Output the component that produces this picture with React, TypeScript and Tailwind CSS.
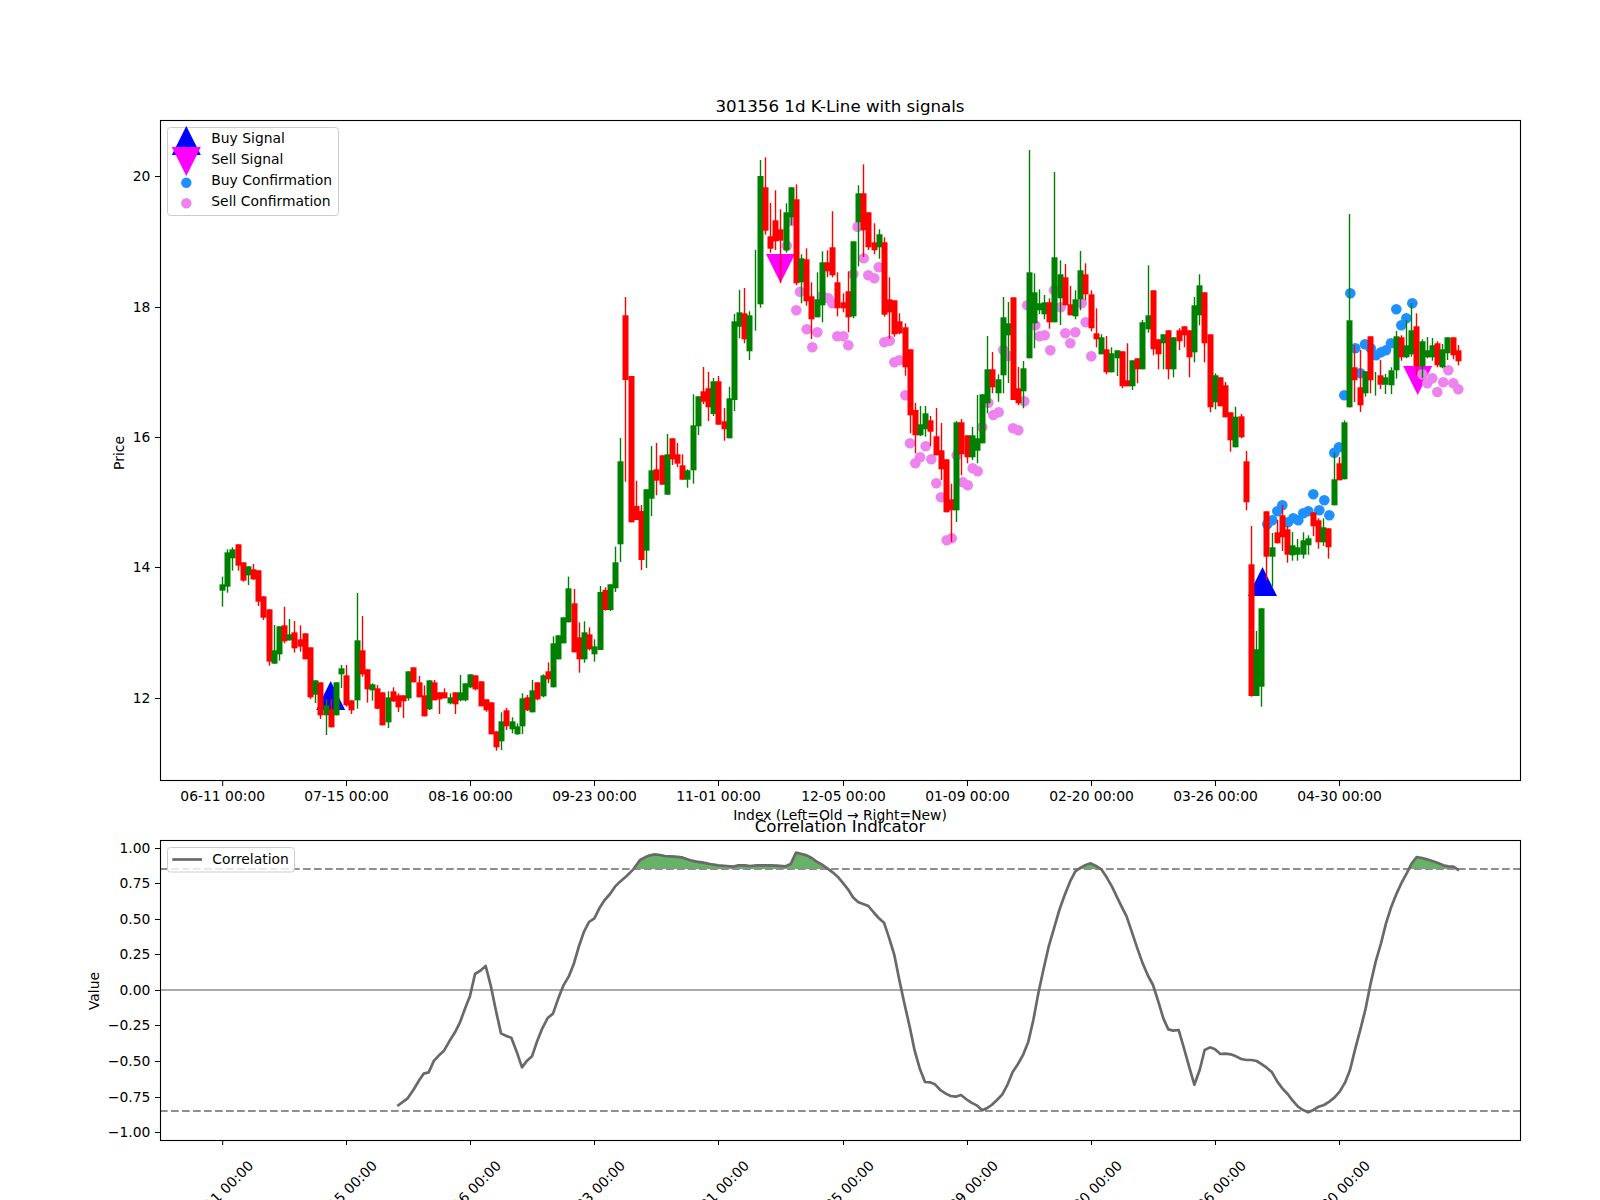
import React from "react";

type C = [number, number, number, number, number];
// candles as [wickTop, bodyTop, bodyBottom, wickBottom, 0 green / 1 red]
const zoomed: C[] = [
[170,193,212,260,0],[88,97,200,218,0],[82,88,115,152,0],[73,73,137,152,1],[127,127,182,185,1],[139,139,166,195,0],[132,148,178,180,1],[151,151,245,258,1],[229,229,293,300,1],[268,268,425,437,1],
[315,391,431,431,0],[319,319,403,422,0],[260,316,364,370,1],[297,343,361,362,0],[303,337,385,398,1],[316,358,380,395,1],[340,340,418,418,1],[382,382,532,537,1],[481,481,524,549,0],[487,487,586,597,1],
[537,556,586,645,0],[537,568,622,622,1],[487,487,586,586,0],[435,445,463,504,0],[435,466,556,560,1],[541,541,571,582,1],[219,361,541,566,0],[288,391,463,470,1],[448,448,508,548,1],[490,493,511,542,0],
[495,505,566,568,1],[517,517,616,616,1],[514,532,607,624,0],[502,514,544,546,1],[520,526,562,576,1],[526,526,544,594,1],[454,454,535,542,0],[442,442,487,487,1],[468,487,532,532,1],[496,526,589,589,1],
[481,481,568,570,0],[480,487,541,541,1],[517,517,538,582,1],[505,517,535,535,1],[520,532,550,553,0],[517,517,553,582,1],[465,517,541,544,0],[490,490,541,544,0],[463,463,502,505,0],[466,466,508,511,1],
[484,484,559,559,1],[538,538,571,575,1],[547,547,643,643,1],[634,634,682,692,1],[577,604,664,690,0],[564,571,619,630,1],[592,604,628,640,0],[610,619,643,644,0],[520,535,619,642,0],[525,532,571,573,1],
[480,511,577,577,0],[487,487,538,541,1],[463,466,529,532,0],[427,454,478,490,1],[349,370,502,502,0],[346,346,418,418,0],[292,292,370,370,0],[170,205,307,307,0],[207,250,397,397,1],[307,352,418,458,1],
[304,337,418,428,0],[322,343,388,391,1],[358,379,403,425,0],
];
const direct: C[] = [
[586,592,650,650,0],[587.3,590,610,610.7,1],[584.3,584.3,610,611,0],[546.7,562.3,588.3,592,0],[438,461.3,544.3,562,0],[297,315.3,380,481.7,1],[376,376,522.3,522.3,1],[480.7,506,520,520,1],[505,511,560,570,1],[489.3,489.3,550.7,568,0],
[446,470.3,498.7,516,0],[443,469.3,480.7,495.3,1],[455.3,455.3,484.7,484.7,1],[434,454.3,494.7,494.7,0],[438.3,438.3,459.3,465,1],[443,454.3,463.7,467.3,1],[454.3,465.3,479.7,479.7,1],[469.3,470.3,479.7,487.7,0],[394.3,425.3,470.3,483.7,0],[396.3,396.3,426.3,435,0],
[367,391.3,401.7,404,1],[372,388.3,407.3,421,1],[378,381.3,414,416,0],[376,381.3,424.7,424.7,1],[408,421.3,429.3,440.7,1],[386.7,398.3,438.3,438.3,0],[314,321.3,400,411,0],[290,312.3,326.7,338.3,0],[288,313.3,339.3,343.3,1],[311.3,315.3,351.3,360,0],
[250,290,290,330.7,0],[160,176,304.3,307.7,0],[157.3,187.3,230.7,234.7,1],[203,236.3,248.7,252.7,1],[190.3,220.3,241.3,250,1],[209.3,229.3,240.7,283,1],[203.3,212.3,250.3,252.7,0],[187.3,187.3,217.3,225,0],[184.3,199.3,283.3,285.3,1],[254.3,258.3,282.3,303.3,0],
[248.3,259.3,301.3,305.7,1],[282.3,296.3,319.3,339,1],[272.3,299.3,317.3,317.3,0],[251.3,262.3,305.3,322.3,0],[250.3,262.3,271.3,277.3,1],[211.3,247.3,275.3,277.3,1],[272.3,282.3,308.3,316.3,1],[293.3,302.3,308.3,312.3,1],[271.3,291.3,317.3,332.3,1],[241.3,241.3,316.3,318.3,0],
[185.3,193.3,222.3,266.3,0],[164.3,193.3,230.3,257,1],[212.3,212.3,247.3,250,1],[223.3,242.3,250.3,254.3,1],[229.3,234.3,247.3,258.7,0],[237.3,242.3,314.7,316.7,1],[277.3,299.3,312.3,338.7,1],[300.3,300.3,334.3,336.7,1],[313.3,321.3,333.3,334.3,1],[323.3,327.3,367.3,375.7,1],
[349.3,349.3,415.3,433.3,1],[403,410,435.3,453.3,1],[406,424.3,435.3,436,0],[406,413.3,429.3,436.7,0],[416,420.3,431.7,446,1],[408,436.3,455.3,455.3,1],[423,450.3,469.3,480,1],[459.3,459.3,512.3,512.3,1],[483.7,499.3,510.3,542,1],[421,422.3,510.3,522,0],
[419,422.3,454.3,475.3,1],[435.3,435.3,457.3,463.3,1],[427,435.3,457.3,460,0],[395,438.3,450.7,463.3,0],[394.3,394.3,443.3,443.3,0],[336,369.3,403.3,413.3,0],[352,369.3,387.3,393.3,1],[374.3,379.3,393.3,401.7,0],[297,317.3,375.3,393.3,0],[302,323.3,335.3,383,0],
[297.3,297.3,400,400,1],[367,388.3,403.3,405.3,1],[361,368.3,391.3,408.3,0],[150,272.3,358.3,358.3,0],[273.3,292.3,323.3,348.3,0],[289.3,303.3,310.3,314,0],[295,302.3,314.3,319.3,0],[298.3,302.3,322.3,328.7,1],[172,257.3,322.3,322.3,0],[260.3,274.3,298.3,325,0],
[264,277.3,305.3,305.3,1],[286,304.3,315.3,315.3,1],[290.3,299.3,316.3,319.3,0],[251,270.3,299.3,310.3,0],[263.3,274.3,294.3,300.3,1],[290.3,294.3,328.3,331.3,1],[308.3,333.3,339.3,347.3,1],[334.3,337.3,354.3,354.3,0],[336,349.3,372.3,374.3,1],[347.3,353.3,372.3,372.3,0],
[350.3,350.3,358.3,376,0],[351.3,351.3,386.3,388.3,1],[343.3,380.3,386.3,386.3,1],[360.3,360.3,386.3,390,0],[358.3,358.3,369.3,383.3,1],[320,322.3,369.3,369.3,0],[265.3,315.3,329.3,332.7,0],[290.3,290.3,349.3,355.3,1],[339.3,339.3,354.3,369.3,1],[334.3,334.3,343.3,369.3,0],
[330.3,330.3,369.3,379.3,1],[337.3,337.3,369.3,377.3,0],[328.3,330.3,341.3,350,1],[326.3,326.3,335.3,347.3,1],[330.3,330.3,357.3,377.3,1],[297,305.3,352.3,362.3,0],[274.3,285.3,315.3,325.3,0],[292.3,292.3,343.3,362.3,1],[334.3,334.3,407.3,412.3,1],[373.3,375.3,402.3,409.3,0],
[377.3,377.3,406.3,406.3,1],[382,385.3,417.3,417.3,1],[412.3,412.3,440.3,451.7,1],[406.7,416.7,447.3,447.3,0],[414,416.3,437.3,438.3,1],[451,461.3,502.3,510.3,1],[526,564.3,696,696.7,1],[631,649.3,696,696,0],[608.3,608.3,686.7,706.7,0],[511.3,511.3,556.7,580,1],
[533,547.3,556.7,586.7,0],[520,532.3,543.3,543.3,1],[505,515.3,537.3,551,1],[526,529.3,554.7,562.7,1],[532,545.3,555.3,560.7,0],[539,547.3,554.7,560.7,0],[532.3,540.3,554.7,558.7,0],[535.3,538.3,545.3,554.7,0],[512.3,512.3,526.3,536,1],[518.3,520.3,542.3,548.7,1],
[518.3,527.3,542.3,546,0],[528.3,528.3,547.3,558.7,1],[452.7,479.3,505.3,505.3,0],[457,463.3,480.3,480.3,1],[420.3,422.3,479.3,479.3,0],[214,320.3,407.3,407.3,0],[345,367.3,380.3,402,1],[350,387.3,405.3,412,1],[371.3,371.3,393.3,396.7,0],[336.3,336.3,380.3,393.3,1],
[372,384,384,395.7,0],[360,375.3,384.7,389,1],[374,377.3,384.7,394,0],[367.3,370.3,385.3,394,0],[331,336.3,370.3,378.7,0],[335.3,337.3,357.3,360.7,1],[320.3,345.3,357.3,358.3,0],[303,330.3,354.3,356.7,0],[313.3,326.3,366.3,375,1],[339.3,341.3,366.3,378,0],
[337,350.3,357.3,358.3,0],[338,345.3,357.3,360.7,0],[341.3,343.3,365.3,367.3,1],[344,349.3,367.3,368.3,0],[337.3,337.3,353.3,360,0],[337.3,337.3,355.3,359.3,1],[345,350.3,361.3,365.3,1],
];
const toReal = (z: C): C => [520 + z[0] / 3, 520 + z[1] / 3, 520 + z[2] / 3, 520 + z[3] / 3, z[4]];
const candles: C[] = [...zoomed.map(toReal), ...direct];
const xOf = (i: number) => 222.6 + 5.17 * i;

const pink: [number, number][] = [
[786.7,245.7],[791.3,221],[800,291.7],[796.3,310.3],[806.7,329.3],[817.3,332.3],[812.3,347.3],[822.3,295.7],[828.3,298.3],[832.3,303.3],[837.3,336.3],[843.3,336.3],[848.3,345.3],[853.3,274.3],[857.7,226.7],[863.7,258.3],[868.3,275.3],[874.3,278.3],[878.7,267.3],[884.3,342.3],[889.7,340.7],[894.3,362.3],[899.3,360.3],[905.3,395.3],
[910,443.3],[925.7,446.3],[920,457.3],[915.3,463.3],[931.3,459.3],[956.7,455.3],[936.3,483.3],[941,497.3],[962.7,482.3],[967.7,485.3],[972.7,468.3],[977.7,471.3],[946.7,540.3],[951.7,538.3],
[988.3,402.7],[993.3,415],[998.7,412.3],[1013,428.3],[1018.3,430.3],[1024.3,401.3],[982.3,427.3],[1003.3,350],[1008.3,356],
[1027.3,305.3],[1035.3,325.3],[1039.3,336.3],[1044.7,335.3],[1050.3,350.3],[1054,290.3],[1060.7,307.3],[1065.3,333.3],[1070.3,343.3],[1075.3,332.3],[1081.7,303.3],[1085.7,322.3],[1091.3,356.3],
[1422.3,374.3],[1432.3,378.3],[1427.3,383.3],[1443.3,382.3],[1437.3,392],[1448.3,370.3],[1453.3,383.3],[1458.3,389.3],
];
const blue: [number, number][] = [
[1350.3,293.3],[1396.3,309.3],[1412.3,303.3],[1406.3,318.3],[1401.3,325.3],[1391,343.3],[1386,350.3],[1381,352.3],[1376,355.3],[1370.7,348.3],[1365,344.3],[1360.3,373.3],[1355.3,348.3],[1344.3,395.3],[1339,447.3],[1334.3,452.7],
[1313.3,494.3],[1324.3,500.3],[1319.3,510.3],[1329.3,515.3],[1308.3,511.3],[1303.3,513.3],[1298.3,520.3],[1293.3,518.3],[1288,522.3],[1282.3,505.3],[1277.3,511.3],[1272.3,520.3],[1267.3,524.3],
];

const c8: number[][] = [[772,978],[803,955],[820,930],[838,900],[851,881],[866,877],[882,842],[897,826],[912,812],[928,784],[945,757],[960,727],[976,683],[990,648],[1005,582],[1021,572],[1037,558],[1053,620],[1068,693],[1083,760],[1099,768],[1114,773],[1130,815],[1146,862],[1161,842],[1176,829],[1192,782],[1207,745],[1223,714],[1239,701],[1255,655],[1270,617],[1286,590],[1301,553],[1317,498],[1332,455],[1347,426],[1363,415],[1378,385],[1394,360],[1410,342],[1425,320]];
const c9: number[][] = [[0,305],[20,288],[40,268],[60,240],[75,232],[90,226],[105,223],[120,225],[135,228],[150,229],[165,230],[185,232],[200,237],[215,242],[230,245],[250,248],[270,252],[295,256],[320,258],[340,260],[355,256],[375,256],[390,258],[410,256],[430,256],[450,256],[470,257],[497,259],[512,252],[528,218],[545,222],[560,226],[575,234],[590,245],[605,253],[622,265],[638,277],[653,290],[668,308],[684,328],[699,352],[714,366],[745,378],[760,396],[776,414],[792,428],[808,476],[823,525],[838,600],[853,670],[869,740],[884,812],[900,868],[915,906],[930,907],[945,913],[961,930],[976,940],[992,948],[1007,950],[1023,945],[1038,957],[1054,968],[1070,976],[1087,991],[1100,985],[1115,975],[1131,960],[1147,943],[1163,913],[1178,876],[1194,852],[1210,823],[1225,785],[1240,720],[1255,640],[1270,570],[1286,500],[1302,445],[1318,390],[1334,345],[1350,305],[1366,274],[1382,263],[1397,255],[1412,250],[1428,258],[1444,268],[1460,292],[1476,320],[1500,370]];
const c10: number[][] = [[80,410],[97,460],[112,505],[128,550],[143,585],[159,615],[175,665],[190,715],[205,748],[220,752],[236,750],[252,805],[268,862],[283,914],[299,870],[314,810],[330,802],[345,808],[361,822],[377,821],[392,823],[408,829],[424,837],[440,840],[455,840],[470,843],[486,853],[500,863],[516,877],[532,905],[547,925],[563,942],[578,962],[594,980],[609,990],[625,997],[640,990],[656,980],[672,975],[688,965],[703,953],[719,935],[735,908],[750,870],[766,805],[782,745],[797,685],[812,610],[827,545],[843,490],[858,430],[874,380],[890,340],[905,308],[920,280],[935,250],[950,231],[966,234],[981,238],[997,243],[1012,248],[1030,256],[1045,259],[1060,260],[1077,271]];
const curve: [number, number][] = [
  ...c8.map(([x, y]) => [140 + x / 3, 780 + y / 3] as [number, number]),
  ...c9.map(([x, y]) => [620 + x / 3, 780 + y / 3] as [number, number]),
  ...c10.map(([x, y]) => [1100 + x / 3, 780 + y / 3] as [number, number]),
];
const curvePts = curve.map((p) => p.join(",")).join(" ");
const fillPts = curvePts + " " + curve[curve.length - 1][0] + ",869 " + curve[0][0] + ",869";

const tickXs = [222.7, 346.5, 470.5, 594.5, 718.5, 843.5, 967.5, 1091.5, 1215.5, 1339.5];
const tickLabels = ["06-11 00:00", "07-15 00:00", "08-16 00:00", "09-23 00:00", "11-01 00:00", "12-05 00:00", "01-09 00:00", "02-20 00:00", "03-26 00:00", "04-30 00:00"];
const topY: [string, number][] = [["20", 176.5], ["18", 307.5], ["16", 437.5], ["14", 567.5], ["12", 698.5]];
const lowY: [string, number][] = [["1.00", 848.5], ["0.75", 883.5], ["0.50", 919.5], ["0.25", 954.5], ["0.00", 990.5], ["−0.25", 1025.5], ["−0.50", 1061.5], ["−0.75", 1097.5], ["−1.00", 1132.5]];

const Tri = ({ x, y, up, fill }: { x: number; y: number; up: boolean; fill: string }) => (
  <polygon points={up ? `${x},${y} ${x - 14.5},${y + 29} ${x + 14.5},${y + 29}` : `${x},${y + 29} ${x - 14.5},${y} ${x + 14.5},${y}`} fill={fill} />
);

export default function App() {
  return (
    <div className="w-[1600px] h-[1200px] overflow-hidden bg-white">
      <svg width={1600} height={1200} viewBox="0 0 1600 1200" className="block font-['DejaVu_Sans',sans-serif] text-[13.89px]" fill="#000">
        <clipPath id="above"><rect x={160} y={840} width={1360} height={29} /></clipPath>

        {/* upper panel */}
        <Tri x={330.7} y={681} up fill="#0000ff" />
        <Tri x={1262.5} y={567} up fill="#0000ff" />
        <Tri x={780.5} y={254} up={false} fill="#ff00ff" />
        <Tri x={1417.7} y={366} up={false} fill="#ff00ff" />
        {blue.map(([x, y], i) => <circle key={i} cx={x} cy={y} r={5.3} fill="#1e90ff" />)}
        {pink.map(([x, y], i) => <circle key={i} cx={x} cy={y} r={5.3} fill="#ee82ee" />)}
        {candles.map((c, i) => {
          const x = Math.floor(xOf(i)) + 0.5;
          const col = c[4] ? "#ff0000" : "#008000";
          return (
            <g key={i}>
              <rect x={x - 0.7} y={c[0]} width={1.4} height={c[3] - c[0]} fill={col} />
              {c[2] > c[1] && <rect x={x - 3} y={c[1]} width={6} height={c[2] - c[1]} fill={col} />}
            </g>
          );
        })}
        <rect x={160.5} y={120.5} width={1360} height={660} fill="none" stroke="#000" strokeWidth={1.11} />
        <text x={840} y={112} textAnchor="middle" className="text-[16.67px]">301356 1d K-Line with signals</text>
        <text transform="translate(124,453) rotate(-90)" textAnchor="middle">Price</text>
        {topY.map(([l, y]) => (
          <g key={l}>
            <rect x={155} y={y - 0.5} width={5} height={1} />
            <text x={150.3} y={y + 4.5} textAnchor="end">{l}</text>
          </g>
        ))}
        {tickXs.map((x, i) => (
          <g key={i}>
            <rect x={x - 0.5} y={781} width={1} height={5} />
            <text x={x} y={801} textAnchor="middle">{tickLabels[i]}</text>
            <rect x={x - 0.5} y={1140} width={1} height={5} />
            <text transform={`translate(${x - 2},1193) rotate(-45)`} y={5} textAnchor="middle">{tickLabels[i]}</text>
          </g>
        ))}
        <text x={840} y={820} textAnchor="middle">Index (Left=Old → Right=New)</text>

        {/* upper legend */}
        <rect x={167.5} y={127.5} width={171} height={88} rx={3} fill="#ffffff" fillOpacity={0.8} stroke="#cccccc" />
        <Tri x={186.3} y={126} up fill="#0000ff" />
        <Tri x={186.3} y={147} up={false} fill="#ff00ff" />
        <circle cx={186.3} cy={182.7} r={5.2} fill="#1e90ff" />
        <circle cx={186.3} cy={203.3} r={5.2} fill="#ee82ee" />
        <text x={211.3} y={143}>Buy Signal</text>
        <text x={211.3} y={164}>Sell Signal</text>
        <text x={211.3} y={185}>Buy Confirmation</text>
        <text x={211.3} y={206}>Sell Confirmation</text>

        {/* lower panel */}
        <line x1={160} x2={1520} y1={990} y2={990} stroke="#aaaaaa" strokeWidth={2} />
        <polygon points={fillPts} fill="#66b266" clipPath="url(#above)" />
        <line x1={160} x2={1520} y1={869} y2={869} stroke="#8f8f8f" strokeWidth={2} strokeDasharray="7.7 3.3" />
        <line x1={160} x2={1520} y1={1111} y2={1111} stroke="#8f8f8f" strokeWidth={2} strokeDasharray="7.7 3.3" />
        <polyline points={curvePts} fill="none" stroke="#696969" strokeWidth={2.7} strokeLinejoin="round" />
        <rect x={160.5} y={840.5} width={1360} height={300} fill="none" stroke="#000" strokeWidth={1.11} />
        <text x={840} y={832} textAnchor="middle" className="text-[16.67px]">Correlation Indicator</text>
        <text transform="translate(99,991) rotate(-90)" textAnchor="middle">Value</text>
        {lowY.map(([l, y]) => (
          <g key={l}>
            <rect x={155} y={y - 0.5} width={5} height={1} />
            <text x={150.3} y={y + 4} textAnchor="end">{l}</text>
          </g>
        ))}
        <rect x={167.5} y={847.5} width={127} height={24.5} rx={3} fill="#ffffff" fillOpacity={0.8} stroke="#cccccc" />
        <line x1={172.3} x2={202} y1={859.5} y2={859.5} stroke="#696969" strokeWidth={2.7} />
        <text x={212.3} y={864}>Correlation</text>
      </svg>
    </div>
  );
}
